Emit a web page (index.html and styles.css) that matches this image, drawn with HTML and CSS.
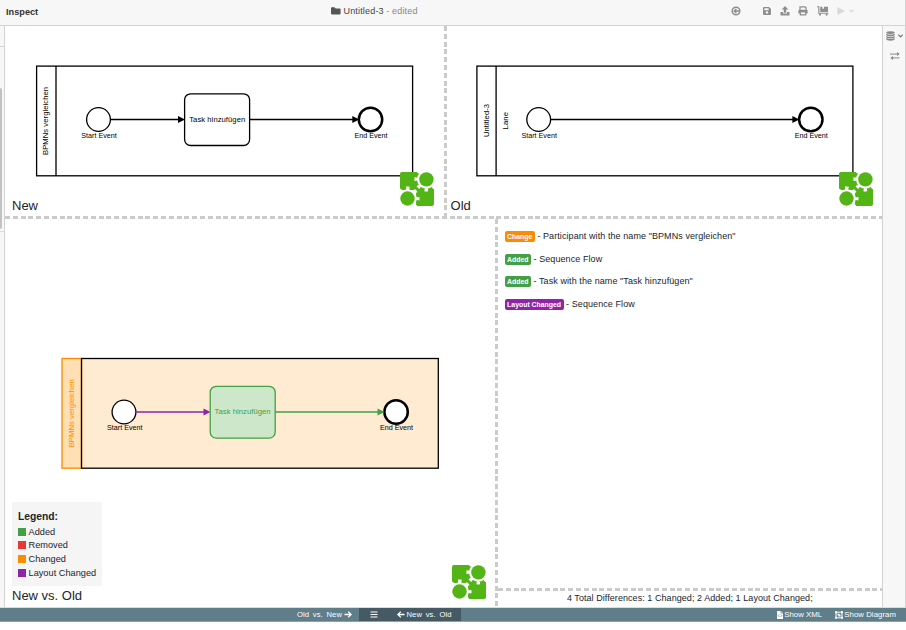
FILE: index.html
```html
<!DOCTYPE html>
<html lang="en">
<head>
<meta charset="utf-8">
<title>Inspect</title>
<link rel="stylesheet" href="styles.css">
</head>
<body>
<svg class="defs" width="0" height="0">
  <defs>
    <symbol id="logo" viewBox="0 0 34 34">
      <path d="M2 0H20V15H34V32Q34 34 32 34H16V18H0V2Q0 0 2 0Z" fill="#52b415"/>
      <g fill="#fff" stroke="#fff">
        <circle cx="26.4" cy="7.4" r="9.3" stroke="none"/>
        <circle cx="26.4" cy="7.4" r="10.3" fill="none" stroke-width="3.4" stroke-dasharray="3.4 4.690" stroke-dashoffset="1.7"/>
        <circle cx="7.5" cy="26.5" r="9.3" stroke="none"/>
        <circle cx="7.5" cy="26.5" r="10.3" fill="none" stroke-width="3.4" stroke-dasharray="3.4 4.690" stroke-dashoffset="1.7"/>
      </g>
      <circle cx="26.4" cy="7.4" r="7.2" fill="#52b415"/>
      <circle cx="7.5" cy="26.5" r="7.2" fill="#52b415"/>
    </symbol>
  </defs>
</svg>
<div class="app">
  <header class="header">
    <h1 class="title">Inspect</h1>
    <div class="file">
      <svg width="10" height="8" viewBox="0 0 10 8"><path d="M0 1.2Q0 .3 .9 .3H3.5L4.7 1.4H8.7Q9.6 1.4 9.6 2.3V6.6Q9.6 7.4 8.7 7.4H.9Q0 7.4 0 6.6Z" fill="#555"/></svg>
      <span class="name">Untitled-3</span><span class="state">- edited</span>
    </div>
    <div class="tools">
      <svg class="back" width="10" height="10" viewBox="0 0 10 10"><circle cx="5" cy="5" r="3.8" fill="none" stroke="#8e8e8e" stroke-width="1.5"/><path d="M8 5H3.5M5.3 2.9L3.2 5L5.3 7.1" fill="none" stroke="#8e8e8e" stroke-width="1.4"/></svg>
      <svg class="save" width="8" height="8" viewBox="0 0 8 8"><path d="M1 0H6L8 2V7Q8 8 7 8H1Q0 8 0 7V1Q0 0 1 0Z" fill="#8e8e8e"/><path d="M1.4 1.3H5.6V3.2H1.4Z" fill="#f7f7f7"/><circle cx="4" cy="5.4" r="1.2" fill="#f7f7f7"/></svg>
      <svg class="upload" width="10" height="10" viewBox="0 0 10 10"><path d="M5 0L8.3 3.5H6.2V6.8H3.8V3.5H1.7Z" fill="#8e8e8e"/><path d="M.5 6.1H3V7.6H7V6.1H9.5V9.4H.5Z" fill="#8e8e8e"/></svg>
      <svg class="print" width="10" height="10" viewBox="0 0 10 10"><path d="M2 4V.8H7L8 1.8V4" fill="none" stroke="#8e8e8e" stroke-width="1.3"/><path d="M1.5 3.8H8.5Q9.6 3.8 9.6 4.8V7.4H8.3V9.4H1.7V7.4H.4V4.8Q.4 3.8 1.5 3.8Z" fill="#8e8e8e"/><path d="M2.9 6.4H7.1V8.2H2.9Z" fill="#f7f7f7"/></svg>
      <svg class="cart" width="12" height="10" viewBox="0 0 12 10"><path d="M0 .8H1.8V7.2H11.5" fill="none" stroke="#8e8e8e" stroke-width="1.1"/><path d="M3.2 .7H5.4V3L6.2 2.5L7 3V.7H11V6H3.2Z" fill="#8e8e8e"/><circle cx="3" cy="8.6" r="1.1" fill="#8e8e8e"/><circle cx="9.6" cy="8.6" r="1.1" fill="#8e8e8e"/></svg>
      <svg class="play" width="8" height="8" viewBox="0 0 8 8"><path d="M.4 0L8 4L.4 8Z" fill="#d9d9d9"/></svg>
      <svg class="chev" width="5" height="4" viewBox="0 0 5 4"><path d="M.5 .8L2.5 2.8L4.5 .8" fill="none" stroke="#d5d5d5" stroke-width="1.1"/></svg>
    </div>
  </header>

  <div class="body">
    <aside class="rail"><div class="rail-top"></div><div class="thumb"></div><div class="rail-end"></div></aside>
    <main class="panels">
      <div class="row top">
        <section class="panel">
          <svg class="diagram" viewBox="5 26 439 190" width="439" height="190">
            <g fill="none" stroke="#000" stroke-width="1.3">
              <rect x="36.6" y="66.1" width="376" height="109.7"/>
              <path d="M56 66V176M110.500 119.500H180M250 119.500H354"/>
              <circle cx="98.500" cy="119.500" r="11.900"/>
              <rect x="184.600" y="93.800" width="65" height="51.700" rx="6"/>
              <circle cx="370.500" cy="119.500" r="11.700" stroke-width="2.500"/>
            </g>
            <path d="M178 116L185 119.500L178 123ZM352.300 116L359.300 119.500L352.300 123Z"/>
            <text x="81.300" y="137.800" textLength="35.500">Start Event</text>
            <text x="354.500" y="137.800" textLength="33">End Event</text>
            <text class="big" x="189.200" y="122" textLength="56">Task hinzufügen</text>
            <text class="big" transform="translate(48.300 155) rotate(-90)" textLength="68">BPMNs vergleichen</text>
          </svg>
          <span class="label">New</span>
          <svg class="logo"><use href="#logo"/></svg>
        </section>
        <div class="vdash"></div>
        <section class="panel">
          <svg class="diagram" viewBox="446.600 26 435 190" width="435" height="190">
            <g fill="none" stroke="#000" stroke-width="1.300">
              <rect x="476.500" y="66.100" width="376" height="109.700"/>
              <path d="M495.700 66V176M550.500 119.500H794"/>
              <circle cx="538.300" cy="119.500" r="11.900"/>
              <circle cx="810.400" cy="119.500" r="11.700" stroke-width="2.500"/>
            </g>
            <path d="M792 116L799 119.500L792 123Z"/>
            <text x="521" y="137.800" textLength="35.500">Start Event</text>
            <text x="794.300" y="137.800" textLength="33">End Event</text>
            <text class="big" transform="translate(488.300 137) rotate(-90)" textLength="33">Untitled-3</text>
            <text class="big" transform="translate(507.800 129.500) rotate(-90)" textLength="17.500">Lane</text>
          </svg>
          <span class="label">Old</span>
          <svg class="logo"><use href="#logo"/></svg>
        </section>
      </div>
      <div class="hdash"></div>
      <div class="row bottom">
        <section class="panel">
          <svg class="diagram" viewBox="5 218 490 389" width="490" height="389">
            <rect x="81.500" y="358.500" width="356.800" height="109.700" fill="#ffebd1"/>
            <rect x="62" y="358.500" width="19.500" height="109.700" fill="#ffdfb3" stroke="#fb8c00" stroke-width="1.300"/>
            <rect x="81.500" y="358.500" width="356.800" height="109.700" fill="none" stroke="#000" stroke-width="1.300"/>
            <g fill="#fff" stroke="#000" stroke-width="1.300">
              <circle cx="124" cy="412" r="11.900"/>
              <circle cx="396.100" cy="412" r="11.700" stroke-width="2.500"/>
            </g>
            <path d="M136 412H204" stroke="#8e24aa" stroke-width="1.400"/>
            <path d="M203.500 408.500L210.500 412L203.500 415.500Z" fill="#8e24aa"/>
            <path d="M275 412H379" stroke="#43a047" stroke-width="1.400"/>
            <path d="M377.500 408.500L384.500 412L377.500 415.500Z" fill="#43a047"/>
            <rect x="210.200" y="386.300" width="65" height="51.800" rx="6" fill="#cde7ca" stroke="#43a047" stroke-width="1.300"/>
            <text x="107" y="430.200" textLength="35.500">Start Event</text>
            <text x="380" y="430.200" textLength="33">End Event</text>
            <text class="big" x="214.600" y="414.300" textLength="56" fill="#43a047">Task hinzufügen</text>
            <text class="big" transform="translate(73.800 447.300) rotate(-90)" textLength="68" fill="#fb8c00">BPMNs vergleichen</text>
          </svg>
          <div class="legend">
            <h2>Legend:</h2>
            <ul>
              <li><i class="added"></i>Added</li>
              <li><i class="removed"></i>Removed</li>
              <li><i class="changed"></i>Changed</li>
              <li><i class="layout"></i>Layout Changed</li>
            </ul>
          </div>
          <span class="label">New vs. Old</span>
          <svg class="logo"><use href="#logo"/></svg>
        </section>
        <div class="vdash"></div>
        <section class="changes">
          <ul class="list">
            <li><b class="changed">Change</b><span>- Participant with the name "BPMNs vergleichen"</span></li>
            <li><b class="added">Added</b><span>- Sequence Flow</span></li>
            <li><b class="added">Added</b><span>- Task with the name "Task hinzufügen"</span></li>
            <li><b class="layout">Layout Changed</b><span>- Sequence Flow</span></li>
          </ul>
          <div class="hdash"></div>
          <p class="summary">4 Total Differences: 1 Changed; 2 Added; 1 Layout Changed;</p>
        </section>
      </div>
    </main>
    <aside class="side">
      <div class="side-row">
        <svg width="9" height="10" viewBox="0 0 9 10"><g fill="#8a8a8a"><path d="M.3 1.500Q.8 .3 4.500 .3T8.700 1.500V2Q8.200 3 4.500 3T.3 2Z"/><path d="M.3 2.700Q2 3.600 4.500 3.600T8.700 2.700V4.300Q8.200 5.200 4.500 5.200T.3 4.300Z"/><path d="M.3 4.900Q2 5.800 4.500 5.800T8.700 4.900V6.500Q8.200 7.400 4.500 7.400T.3 6.500Z"/><path d="M.3 7.100Q2 8 4.500 8T8.700 7.100V8.600Q8.200 9.700 4.500 9.700T.3 8.600Z"/></g></svg>
        <svg width="5" height="4" viewBox="0 0 5 4"><path d="M.4 .7L2.500 2.800L4.600 .7" fill="none" stroke="#777" stroke-width="1.200"/></svg>
      </div>
      <svg class="swap" width="10" height="8" viewBox="0 0 10 8"><path d="M0 2.100H8.500M1.500 5.900H9.500" stroke="#888" stroke-width="1"/><path d="M7 0L9.700 2.100L7 4.100ZM3 3.900L.3 5.900L3 8Z" fill="#888"/></svg>
    </aside>
  </div>

  <footer class="footer">
    <button class="tab old-new">Old vs. New <svg width="8" height="7" viewBox="0 0 8 7"><path d="M.5 3.500H7M4.200 .6L7.100 3.500L4.200 6.400" fill="none" stroke="#fff" stroke-width="1.300"/></svg></button>
    <div class="active">
      <svg width="8" height="7" viewBox="0 0 8 7"><path d="M.5 1H7.500M.5 3.500H7.500M.5 6H7.500" stroke="#fff" stroke-width="1"/></svg>
      <button class="tab new-old"><svg width="8" height="7" viewBox="0 0 8 7"><path d="M7.500 3.500H1M3.800 .6L.9 3.500L3.800 6.400" fill="none" stroke="#fff" stroke-width="1.300"/></svg> New vs. Old</button>
    </div>
    <div class="views">
      <button class="tab xml"><svg width="6" height="8" viewBox="0 0 6 8"><path d="M0 0H4L6 2V8H0Z" fill="#fff"/><path d="M4 0V2H6M2.300 3.500L1.200 4.700L2.300 6M3.700 3.500L4.800 4.700L3.700 6" fill="none" stroke="#607d8a" stroke-width=".7"/></svg>Show XML</button>
      <button class="tab dia"><svg width="8" height="8" viewBox="0 0 8 8"><path d="M1 1.200H7V6.800H1Z" fill="none" stroke="#fff"/><path d="M0 .2H2V2.200H0ZM6 .2H8V2.200H6ZM0 5.800H2V7.800H0ZM6 5.800H8V7.800H6ZM2.400 2.700H4.600V3.700H5.600V5.400H3.400V4.300H2.400Z" fill="#fff"/></svg>Show Diagram</button>
    </div>
  </footer>
</div>
</body>
</html>
```
FILE: styles.css
```css
* { box-sizing: border-box; }
body { margin: 0; background: #fff; color: #22242a; font-family: "Liberation Sans", Arial, sans-serif; overflow: hidden; }
h1, h2, p, ul { margin: 0; padding: 0; list-style: none; }
svg { display: block; flex: none; }
.defs { position: absolute; }
.app { width: 906px; height: 622px; display: flex; flex-direction: column; }

.header { height: 26px; display: grid; grid-template-columns: 331px 400px 1fr; background: #f7f7f7; border-bottom: 1px solid #d3d3d3; padding-bottom: 3px; align-items: center; border-right: 1px solid #cfd4da; }
.title { font-size: 9.200px; line-height: 12px; padding: 1px 0 0 6px; color: #333; }
.file { display: flex; align-items: center; font-size: 9px; letter-spacing: .17px; line-height: 12px; }
.name { color: #444; margin: 0 2.500px 0 2.500px; }
.state { color: #888; }
.tools { display: flex; align-items: center; }
.save { margin-left: 21.500px; }
.upload { margin-left: 9px; }
.print { margin-left: 8px; }
.cart { margin-left: 9px; }
.play { margin-left: 8px; }
.chev { margin-left: 4px; }

.body { height: 581px; display: flex; }
.rail { width: 5px; background: #f7f7f7; border-right: 1px solid #d3d3d3; }
.rail-top { height: 21px; border-bottom: 1px solid #d3d3d3; }
.thumb { width: 2px; height: 141px; margin-top: 41px; background: #c3c3c3; border-radius: 0 2px 2px 0; }
.rail-end { height: 3px; border-bottom: 1px solid #dcdcdc; }
.panels { width: 877px; display: flex; flex-direction: column; }
.row { display: flex; }
.top { height: 190px; }
.bottom { flex: 1; }
.panel { position: relative; width: 439px; flex: none; }
.top .panel:last-child { width: 435px; }
.bottom .panel { width: 490px; }
.vdash { flex: none; width: 2.600px; background: repeating-linear-gradient(to bottom, #cbcbcb 0 5px, transparent 5px 7.800px); }
.hdash { flex: none; height: 2.600px; background: repeating-linear-gradient(to right, #cbcbcb 0 5px, transparent 5px 7.800px); }
.diagram { display: block; overflow: hidden; }
.bottom .diagram { position: absolute; left: 0; top: -.600px; }
.diagram text { font-size: 7.200px; }
.diagram .big { font-size: 7.650px; }
.label { position: absolute; left: 7px; bottom: 3px; font-size: 13px; line-height: 15px; }
.top .panel:last-child .label { left: 4px; }
.bottom .label { bottom: 4px; }
.logo { position: absolute; left: 395.300px; bottom: 10px; width: 34px; height: 34px; }
.top .panel:last-child .logo { left: 392.400px; }
.bottom .logo { left: 446.500px; bottom: 8px; }

.legend { position: absolute; left: 7px; bottom: 21px; width: 90px; height: 84px; padding: 8px 0 8px 6px; background: #f5f5f5; }
.legend h2 { font-size: 10.300px; line-height: 14px; margin-bottom: 1px; }
.legend li { display: flex; align-items: center; height: 13.600px; font-size: 9.200px; letter-spacing: .02px; white-space: nowrap; }
.legend i { flex: none; width: 8px; height: 8px; margin-right: 2.500px; }
.added { background: #43a047; }
.removed { background: #e53935; }
.changed { background: #fb8c00; }
.layout { background: #8e24aa; }

.changes { flex: 1; display: flex; flex-direction: column; }
.list { flex: 1; padding: 6.200px 0 0 7px; }
.list li { display: flex; align-items: center; height: 22.600px; font-size: 9px; letter-spacing: .08px; white-space: nowrap; }
.list b { height: 11px; padding: 0 2.500px; margin: 1px 2.500px 0 0; border-radius: 2px; color: #fff; font-size: 6.900px; line-height: 11px; letter-spacing: 0; }
.summary { height: 16.500px; text-align: center; font-size: 9px; line-height: 15px; letter-spacing: .06px; }

.side { flex: 1; background: #f7f7f7; border-left: 1px solid #d3d3d3; border-right: 1px solid #cfd4da; padding: 5px 0 0 3px; }
.side-row { display: flex; align-items: center; gap: 2.500px; }
.swap { margin: 11px 0 0 4px; }

.footer { height: 15px; display: flex; background: #607d8a; border-top: 1px solid #d6dde0; border-bottom: 1px solid #8ba0aa; }
.tab { display: flex; align-items: center; padding: 0; border: 0; background: none; color: #fff; font: 7.600px/12px "Liberation Sans", Arial, sans-serif; letter-spacing: .1px; white-space: nowrap; }
.old-new { width: 359px; padding-left: 297px; gap: 2px; }
.active { width: 102px; display: flex; align-items: center; padding-left: 11px; gap: 18.500px; background: #455a64; }
.new-old { gap: 2px; }
.old-new, .new-old { word-spacing: 1.500px; }
.views { flex: 1; display: flex; justify-content: flex-end; gap: 12.500px; padding-right: 10px; }
.xml, .dia { gap: 1.500px; font-size: 7.800px; letter-spacing: .05px; }
```
